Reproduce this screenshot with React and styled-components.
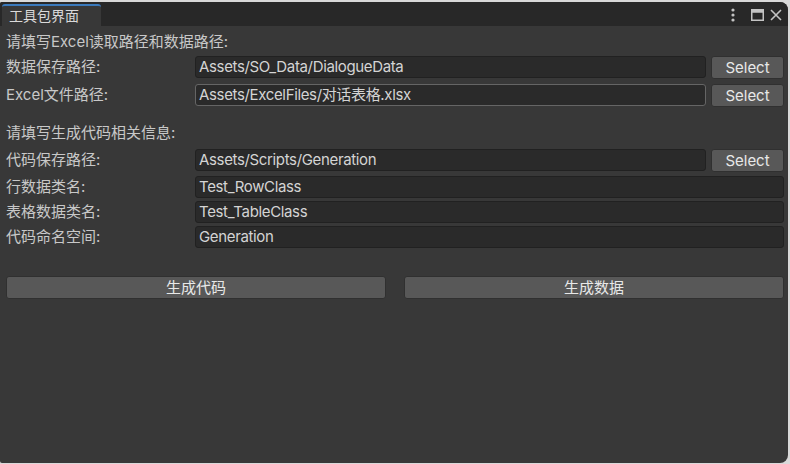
import React from 'react'
import styled, { createGlobalStyle } from 'styled-components'

const Global = createGlobalStyle`
  html, body {
    margin: 0;
    padding: 0;
    background: #d9d9d9;
    width: 790px;
    height: 464px;
    overflow: hidden;
  }
  * { box-sizing: border-box; }
`

const Window = styled.div`
  margin-top: 2px;
  width: 788px;
  height: 461px;
  background: #383838;
  border-radius: 2px 8px 8px 2px;
  overflow: hidden;
  display: flex;
  flex-direction: column;
  font-family: "Inter", "Noto Sans CJK SC", sans-serif;
  font-size: 15px;
  color: #c8c8c8;
`

const TabBar = styled.div`
  height: 24px;
  background: #282828;
  display: flex;
  align-items: flex-end;
  padding-left: 2px;
`

const Tab = styled.div`
  width: 99px;
  height: 22px;
  background: #383838;
  border-top: 2px solid #3a79bb;
  border-radius: 3px 3px 0 0;
  color: #dadada;
  font-size: 14px;
  line-height: 20px;
  padding-left: 7px;
`

const TabTools = styled.div`
  margin-left: auto;
  align-self: center;
  display: flex;
  align-items: center;
  gap: 6px;
  padding-right: 6px;
  padding-top: 2px;
  color: #c4c4c4;
`

const Body = styled.div`
  display: flex;
  flex-direction: column;
  padding: 6px 4px 0 6px;
`

const Header = styled.div`
  height: 20px;
  line-height: 20px;
  margin-top: ${p => p.$top || 0}px;
  margin-bottom: ${p => p.$bottom || 3}px;
`

const Row = styled.div`
  display: grid;
  grid-template-columns: 184px 1fr ${p => (p.$button ? '73px' : '')};
  column-gap: 5px;
  align-items: center;
  height: ${p => (p.$button ? 24 : 22)}px;
  margin-bottom: ${p => p.$gap ?? 3}px;
`

const Label = styled.div`
  white-space: nowrap;
  line-height: 20px;
`

const Field = styled.div`
  height: 22px;
  background: #2a2a2a;
  border: 1px solid ${p => (p.$hover ? '#656565' : '#212121')};
  border-radius: 3px;
  color: #d4d4d4;
  padding-left: 3px;
  line-height: 20px;
  letter-spacing: -0.35px;
  white-space: nowrap;
  overflow: hidden;
`

const Button = styled.div`
  height: ${p => p.$h || 23}px;
  background: #585858;
  border: 1px solid #303030;
  border-radius: 3px;
  color: #e8e8e8;
  text-align: center;
  line-height: ${p => (p.$h || 23) - 2}px;
  white-space: nowrap;
`

const Actions = styled.div`
  display: grid;
  grid-template-columns: 1fr 1fr;
  column-gap: 18px;
  margin-top: 25px;
`

const Dots = () => (
  <svg width="4" height="14" viewBox="0 0 4 14">
    <circle cx="2" cy="2" r="1.6" fill="currentColor" />
    <circle cx="2" cy="7" r="1.6" fill="currentColor" />
    <circle cx="2" cy="12" r="1.6" fill="currentColor" />
  </svg>
)

const Maximize = () => (
  <svg width="13" height="12" viewBox="0 0 13 12">
    <rect x="0.75" y="0.75" width="11.5" height="10.5" fill="none" stroke="currentColor" strokeWidth="1.5" />
    <rect x="0.75" y="0.75" width="11.5" height="3" fill="currentColor" />
  </svg>
)

const Close = () => (
  <svg width="12" height="12" viewBox="0 0 12 12">
    <path d="M1 1 L11 11 M11 1 L1 11" stroke="currentColor" strokeWidth="1.6" />
  </svg>
)

export default function App() {
  return (
    <>
      <Global />
      <Window>
        <TabBar>
          <Tab>工具包界面</Tab>
          <TabTools>
            <Dots />
            <span style={{ width: 4 }} />
            <Maximize />
            <Close />
          </TabTools>
        </TabBar>
        <Body>
          <Header>请填写Excel读取路径和数据路径:</Header>
          <Row $button $gap={4}>
            <Label>数据保存路径:</Label>
            <Field>Assets/SO_Data/DialogueData</Field>
            <Button>Select</Button>
          </Row>
          <Row $button $gap={0}>
            <Label>Excel文件路径:</Label>
            <Field $hover>Assets/ExcelFiles/对话表格.xlsx</Field>
            <Button>Select</Button>
          </Row>
          <Header $top={16} $bottom={5}>请填写生成代码相关信息:</Header>
          <Row $button $gap={4}>
            <Label>代码保存路径:</Label>
            <Field>Assets/Scripts/Generation</Field>
            <Button>Select</Button>
          </Row>
          <Row>
            <Label>行数据类名:</Label>
            <Field>Test_RowClass</Field>
          </Row>
          <Row>
            <Label>表格数据类名:</Label>
            <Field>Test_TableClass</Field>
          </Row>
          <Row>
            <Label>代码命名空间:</Label>
            <Field>Generation</Field>
          </Row>
          <Actions>
            <Button>生成代码</Button>
            <Button>生成数据</Button>
          </Actions>
        </Body>
      </Window>
    </>
  )
}
